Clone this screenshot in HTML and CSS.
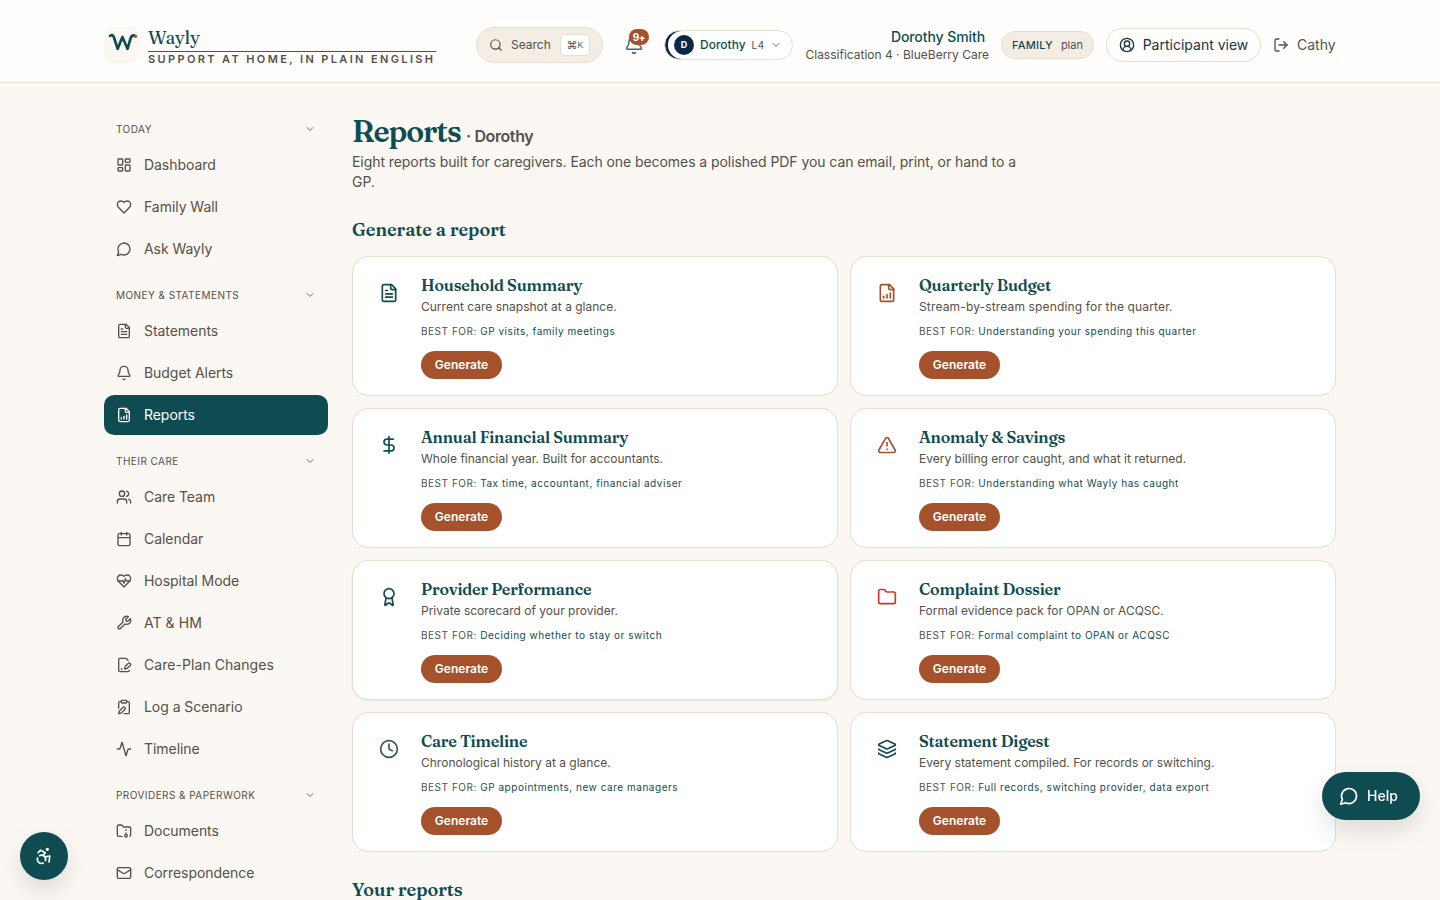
FILE: index.html
```html
<!DOCTYPE html>
<html lang="en">
<head>
    <meta charset="UTF-8">
    <meta name="viewport" content="width=device-width, initial-scale=1.0">
    <title>Reports - Wayly</title>
    <link rel="stylesheet" href="styles.css">
</head>
<body>
    <!-- icon set -->
    <svg class="sprite">
        <symbol id="search" viewBox="0 0 24 24"><circle cx="11" cy="11" r="8"/><path d="m21 21-4.3-4.3"/></symbol>
        <symbol id="bell" viewBox="0 0 24 24"><path d="M10.268 21a2 2 0 0 0 3.464 0"/><path d="M3.262 15.326A1 1 0 0 0 4 17h16a1 1 0 0 0 .74-1.673C19.41 13.956 18 12.499 18 8A6 6 0 0 0 6 8c0 4.499-1.411 5.956-2.738 7.326"/></symbol>
        <symbol id="chevron" viewBox="0 0 24 24"><path d="m6 9 6 6 6-6"/></symbol>
        <symbol id="user-circle" viewBox="0 0 24 24"><path d="M18 20a6 6 0 0 0-12 0"/><circle cx="12" cy="10" r="4"/><circle cx="12" cy="12" r="10"/></symbol>
        <symbol id="logout" viewBox="0 0 24 24"><path d="M9 21H5a2 2 0 0 1-2-2V5a2 2 0 0 1 2-2h4"/><path d="m16 17 5-5-5-5"/><path d="M21 12H9"/></symbol>
        <symbol id="dashboard" viewBox="0 0 24 24"><rect width="7" height="9" x="3" y="3" rx="1"/><rect width="7" height="5" x="14" y="3" rx="1"/><rect width="7" height="9" x="14" y="12" rx="1"/><rect width="7" height="5" x="3" y="16" rx="1"/></symbol>
        <symbol id="heart" viewBox="0 0 24 24"><path d="M19 14c1.49-1.46 3-3.21 3-5.5A5.5 5.5 0 0 0 16.5 3c-1.76 0-3 .5-4.5 2-1.5-1.5-2.74-2-4.5-2A5.5 5.5 0 0 0 2 8.5c0 2.3 1.5 4.05 3 5.5l7 7Z"/></symbol>
        <symbol id="message" viewBox="0 0 24 24"><path d="M7.9 20A9 9 0 1 0 4 16.1L2 22Z"/></symbol>
        <symbol id="file-text" viewBox="0 0 24 24"><path d="M15 2H6a2 2 0 0 0-2 2v16a2 2 0 0 0 2 2h12a2 2 0 0 0 2-2V7Z"/><path d="M14 2v4a2 2 0 0 0 2 2h4"/><path d="M10 9H8"/><path d="M16 13H8"/><path d="M16 17H8"/></symbol>
        <symbol id="file-chart" viewBox="0 0 24 24"><path d="M15 2H6a2 2 0 0 0-2 2v16a2 2 0 0 0 2 2h12a2 2 0 0 0 2-2V7Z"/><path d="M14 2v4a2 2 0 0 0 2 2h4"/><path d="M8 18v-2"/><path d="M12 18v-4"/><path d="M16 18v-6"/></symbol>
        <symbol id="users" viewBox="0 0 24 24"><path d="M16 21v-2a4 4 0 0 0-4-4H6a4 4 0 0 0-4 4v2"/><circle cx="9" cy="7" r="4"/><path d="M22 21v-2a4 4 0 0 0-3-3.87"/><path d="M16 3.13a4 4 0 0 1 0 7.75"/></symbol>
        <symbol id="calendar" viewBox="0 0 24 24"><path d="M8 2v4"/><path d="M16 2v4"/><rect width="18" height="18" x="3" y="4" rx="2"/><path d="M3 10h18"/></symbol>
        <symbol id="heart-pulse" viewBox="0 0 24 24"><path d="M19 14c1.49-1.46 3-3.21 3-5.5A5.5 5.5 0 0 0 16.5 3c-1.76 0-3 .5-4.5 2-1.5-1.5-2.74-2-4.5-2A5.5 5.5 0 0 0 2 8.5c0 2.3 1.5 4.05 3 5.5l7 7Z"/><path d="M3.22 12H9.5l.5-1 2 4.5 2-7 1.5 3.5h5.27"/></symbol>
        <symbol id="wrench" viewBox="0 0 24 24"><path d="M14.7 6.3a1 1 0 0 0 0 1.4l1.6 1.6a1 1 0 0 0 1.4 0l3.77-3.77a6 6 0 0 1-7.94 7.94l-6.91 6.91a2.12 2.12 0 0 1-3-3l6.91-6.91a6 6 0 0 1 7.94-7.94l-3.76 3.76z"/></symbol>
        <symbol id="file-pen" viewBox="0 0 24 24"><path d="m18 5-2.414-2.414A2 2 0 0 0 14.172 2H6a2 2 0 0 0-2 2v16a2 2 0 0 0 2 2h12a2 2 0 0 0 2-2"/><path d="M21.378 12.626a1 1 0 0 0-3.004-3.004l-4.01 4.012a2 2 0 0 0-.506.854l-.837 2.87a.5.5 0 0 0 .62.62l2.87-.837a2 2 0 0 0 .854-.506z"/><path d="M8 18h1"/></symbol>
        <symbol id="clipboard-pen" viewBox="0 0 24 24"><rect width="8" height="4" x="8" y="2" rx="1"/><path d="M16 4h2a2 2 0 0 1 2 2v14a2 2 0 0 1-2 2h-5.5"/><path d="M4 13.5V6a2 2 0 0 1 2-2h2"/><path d="M13.378 15.626a1 1 0 1 0-3.004-3.004l-5.01 5.012a2 2 0 0 0-.506.854l-.837 2.87a.5.5 0 0 0 .62.62l2.87-.837a2 2 0 0 0 .854-.506z"/></symbol>
        <symbol id="activity" viewBox="0 0 24 24"><path d="M22 12h-2.48a2 2 0 0 0-1.93 1.46l-2.35 8.36a.25.25 0 0 1-.48 0L9.24 2.18a.25.25 0 0 0-.48 0l-2.35 8.36A2 2 0 0 1 4.49 12H2"/></symbol>
        <symbol id="folder-archive" viewBox="0 0 24 24"><circle cx="15" cy="19" r="2"/><path d="M20.9 19.8A2 2 0 0 0 22 18V8a2 2 0 0 0-2-2h-7.9a2 2 0 0 1-1.69-.9L9.6 3.9A2 2 0 0 0 7.93 3H4a2 2 0 0 0-2 2v13a2 2 0 0 0 2 2h5.1"/><path d="M15 11v-1"/><path d="M15 17v-2"/></symbol>
        <symbol id="mail" viewBox="0 0 24 24"><rect width="20" height="16" x="2" y="4" rx="2"/><path d="m22 7-8.97 5.7a1.94 1.94 0 0 1-2.06 0L2 7"/></symbol>
        <symbol id="dollar" viewBox="0 0 24 24"><path d="M12 2v20"/><path d="M17 5H9.5a3.5 3.5 0 0 0 0 7h5a3.5 3.5 0 0 1 0 7H6"/></symbol>
        <symbol id="warning" viewBox="0 0 24 24"><path d="m21.73 18-8-14a2 2 0 0 0-3.48 0l-8 14A2 2 0 0 0 4 21h16a2 2 0 0 0 1.73-3"/><path d="M12 9v4"/><path d="M12 17h.01"/></symbol>
        <symbol id="award" viewBox="0 0 24 24"><path d="m15.477 12.89 1.515 8.526a.5.5 0 0 1-.81.47l-3.58-2.687a1 1 0 0 0-1.197 0l-3.586 2.686a.5.5 0 0 1-.81-.469l1.514-8.526"/><circle cx="12" cy="8" r="6"/></symbol>
        <symbol id="folder" viewBox="0 0 24 24"><path d="M20 20a2 2 0 0 0 2-2V8a2 2 0 0 0-2-2h-7.9a2 2 0 0 1-1.69-.9L9.6 3.9A2 2 0 0 0 7.93 3H4a2 2 0 0 0-2 2v13a2 2 0 0 0 2 2Z"/></symbol>
        <symbol id="clock" viewBox="0 0 24 24"><circle cx="12" cy="12" r="10"/><path d="M12 6v6l4 2"/></symbol>
        <symbol id="layers" viewBox="0 0 24 24"><path d="M12.83 2.18a2 2 0 0 0-1.66 0L2.6 6.08a1 1 0 0 0 0 1.83l8.58 3.91a2 2 0 0 0 1.66 0l8.58-3.9a1 1 0 0 0 0-1.83z"/><path d="M2 12a1 1 0 0 0 .58.91l8.6 3.91a2 2 0 0 0 1.65 0l8.58-3.9A1 1 0 0 0 22 12"/><path d="M2 17a1 1 0 0 0 .58.91l8.6 3.91a2 2 0 0 0 1.65 0l8.58-3.9A1 1 0 0 0 22 17"/></symbol>
        <symbol id="accessibility" viewBox="0 0 24 24"><circle cx="16" cy="4" r="1"/><path d="m18 19 1-7-6 1"/><path d="m5 8 3-3 5.5 3-2.36 3.5"/><path d="M4.24 14.5a5 5 0 0 0 6.88 6"/><path d="M13.76 17.5a5 5 0 0 0-6.88-6"/></symbol>
    </svg>

    <header class="header">
        <div class="header-inner">
            <a class="brand">
                <svg class="logo" viewBox="0 0 36 36">
                    <path d="M6 9C8.2 7.4 9.4 8.4 10.1 11l3.6 10.8L18.4 10l5.1 11.8L26.6 11.4C27.2 9.2 28 8.4 29.8 8.3"/>
                    <circle cx="31.5" cy="9.3" r="1.7"/>
                </svg>
                <div class="brand-text">
                    <div class="brand-name">Wayly</div>
                    <div class="tagline">SUPPORT AT HOME, IN PLAIN ENGLISH</div>
                </div>
            </a>
            <div class="header-right">
                <button class="search"><svg class="icon"><use href="#search"/></svg><span>Search</span><kbd><span>⌘</span>K</kbd></button>
                <button class="bell"><svg class="icon"><use href="#bell"/></svg><span class="badge">9+</span></button>
                <button class="profile">
                    <span class="avatar">D</span><span class="profile-name">Dorothy</span><span class="level">L4</span>
                    <svg class="icon"><use href="#chevron"/></svg>
                </button>
                <div class="person">
                    <div class="person-name">Dorothy Smith</div>
                    <div class="person-info">Classification 4 · BlueBerry Care</div>
                </div>
                <div class="plan"><b>FAMILY</b><span>plan</span></div>
                <button class="participant"><svg class="icon"><use href="#user-circle"/></svg>Participant view</button>
                <button class="logout"><svg class="icon"><use href="#logout"/></svg>Cathy</button>
            </div>
        </div>
    </header>

    <div class="layout">
        <nav class="sidebar">
            <div class="nav-group">
                <div class="nav-title">TODAY<svg class="icon"><use href="#chevron"/></svg></div>
                <a class="nav-item"><svg class="icon"><use href="#dashboard"/></svg>Dashboard</a>
                <a class="nav-item"><svg class="icon"><use href="#heart"/></svg>Family Wall</a>
                <a class="nav-item"><svg class="icon"><use href="#message"/></svg>Ask Wayly</a>
            </div>
            <div class="nav-group">
                <div class="nav-title">MONEY &amp; STATEMENTS<svg class="icon"><use href="#chevron"/></svg></div>
                <a class="nav-item"><svg class="icon"><use href="#file-text"/></svg>Statements</a>
                <a class="nav-item"><svg class="icon"><use href="#bell"/></svg>Budget Alerts</a>
                <a class="nav-item active"><svg class="icon"><use href="#file-chart"/></svg>Reports</a>
            </div>
            <div class="nav-group">
                <div class="nav-title">THEIR CARE<svg class="icon"><use href="#chevron"/></svg></div>
                <a class="nav-item"><svg class="icon"><use href="#users"/></svg>Care Team</a>
                <a class="nav-item"><svg class="icon"><use href="#calendar"/></svg>Calendar</a>
                <a class="nav-item"><svg class="icon"><use href="#heart-pulse"/></svg>Hospital Mode</a>
                <a class="nav-item wide"><svg class="icon"><use href="#wrench"/></svg>AT &amp; HM</a>
                <a class="nav-item wide"><svg class="icon"><use href="#file-pen"/></svg>Care-Plan Changes</a>
                <a class="nav-item"><svg class="icon"><use href="#clipboard-pen"/></svg>Log a Scenario</a>
                <a class="nav-item"><svg class="icon"><use href="#activity"/></svg>Timeline</a>
            </div>
            <div class="nav-group">
                <div class="nav-title">PROVIDERS &amp; PAPERWORK<svg class="icon"><use href="#chevron"/></svg></div>
                <a class="nav-item"><svg class="icon"><use href="#folder-archive"/></svg>Documents</a>
                <a class="nav-item"><svg class="icon"><use href="#mail"/></svg>Correspondence</a>
            </div>
        </nav>

        <main class="main">
            <h1>Reports <span>· Dorothy</span></h1>
            <p class="intro">Eight reports built for caregivers. Each one becomes a polished PDF you can email, print, or hand to a GP.</p>

            <h2>Generate a report</h2>
            <div class="cards">
                <div class="card">
                    <div class="card-icon"><svg class="icon"><use href="#file-text"/></svg></div>
                    <div>
                        <h3>Household Summary</h3>
                        <p class="desc">Current care snapshot at a glance.</p>
                        <p class="best">BEST FOR: <span>GP visits, family meetings</span></p>
                        <button class="generate">Generate</button>
                    </div>
                </div>
                <div class="card">
                    <div class="card-icon rust"><svg class="icon"><use href="#file-chart"/></svg></div>
                    <div>
                        <h3>Quarterly Budget</h3>
                        <p class="desc wide">Stream-by-stream spending for the quarter.</p>
                        <p class="best">BEST FOR: <span>Understanding your spending this quarter</span></p>
                        <button class="generate">Generate</button>
                    </div>
                </div>
                <div class="card">
                    <div class="card-icon"><svg class="icon"><use href="#dollar"/></svg></div>
                    <div>
                        <h3>Annual Financial Summary</h3>
                        <p class="desc">Whole financial year. Built for accountants.</p>
                        <p class="best">BEST FOR: <span>Tax time, accountant, financial adviser</span></p>
                        <button class="generate">Generate</button>
                    </div>
                </div>
                <div class="card">
                    <div class="card-icon rust"><svg class="icon"><use href="#warning"/></svg></div>
                    <div>
                        <h3>Anomaly &amp; Savings</h3>
                        <p class="desc">Every billing error caught, and what it returned.</p>
                        <p class="best">BEST FOR: <span>Understanding what Wayly has caught</span></p>
                        <button class="generate">Generate</button>
                    </div>
                </div>
                <div class="card raised">
                    <div class="card-icon"><svg class="icon"><use href="#award"/></svg></div>
                    <div>
                        <h3>Provider Performance</h3>
                        <p class="desc">Private scorecard of your provider.</p>
                        <p class="best">BEST FOR: <span>Deciding whether to stay or switch</span></p>
                        <button class="generate">Generate</button>
                    </div>
                </div>
                <div class="card">
                    <div class="card-icon red"><svg class="icon"><use href="#folder"/></svg></div>
                    <div>
                        <h3>Complaint Dossier</h3>
                        <p class="desc">Formal evidence pack for OPAN or ACQSC.</p>
                        <p class="best">BEST FOR: <span>Formal complaint to OPAN or ACQSC</span></p>
                        <button class="generate">Generate</button>
                    </div>
                </div>
                <div class="card">
                    <div class="card-icon slate"><svg class="icon"><use href="#clock"/></svg></div>
                    <div>
                        <h3>Care Timeline</h3>
                        <p class="desc">Chronological history at a glance.</p>
                        <p class="best">BEST FOR: <span>GP appointments, new care managers</span></p>
                        <button class="generate">Generate</button>
                    </div>
                </div>
                <div class="card">
                    <div class="card-icon"><svg class="icon"><use href="#layers"/></svg></div>
                    <div>
                        <h3>Statement Digest</h3>
                        <p class="desc">Every statement compiled. For records or switching.</p>
                        <p class="best">BEST FOR: <span>Full records, switching provider, data export</span></p>
                        <button class="generate">Generate</button>
                    </div>
                </div>
            </div>

            <h2>Your reports</h2>
        </main>
    </div>

    <button class="a11y"><svg class="icon"><use href="#accessibility"/></svg></button>
    <button class="help"><svg class="icon"><use href="#message"/></svg>Help</button>
</body>
</html>
```
FILE: styles.css
```css
* {
    box-sizing: border-box;
}

body {
    margin: 0;
    height: 900px;
    overflow: hidden;
    font-family: Inter, sans-serif;
    font-size: 14px;
    line-height: 20px;
    color: #54504a;
    background: #fbf7f2;
}

h1, h2, h3, p {
    margin: 0;
}

h1, h2, h3, .brand-name {
    font-family: Fraunces, "Liberation Serif", serif;
    font-weight: 600;
    color: #0f4c52;
    white-space: nowrap;
}

button {
    padding: 0;
    border: none;
    background: none;
    font: inherit;
    color: inherit;
    cursor: pointer;
}

.sprite {
    display: none;
}

.icon {
    width: 16px;
    height: 16px;
    flex-shrink: 0;
    fill: none;
    stroke: currentColor;
    stroke-width: 2;
    stroke-linecap: round;
    stroke-linejoin: round;
}

/* header */
.header {
    height: 83px;
    background: #fffefc;
    border-bottom: 1px solid #e6ded0;
}

.header-inner {
    display: flex;
    justify-content: space-between;
    align-items: center;
    width: 1232px;
    height: 82px;
    margin: 0 auto;
    padding-top: 8px;
}

.brand {
    display: flex;
    gap: 8px;
    margin-top: 2px;
}

.logo {
    width: 36px;
    height: 36px;
    margin-top: 1px;
    border-radius: 10px;
    background: #fbf7f2;
}

.logo path {
    fill: none;
    stroke: #0f4c52;
    stroke-width: 2.7;
    stroke-linecap: round;
    stroke-linejoin: round;
}

.logo circle {
    fill: #a5512b;
}

.brand-text {
    width: 288px;
}

.brand-name {
    height: 26px;
    font-size: 18px;
    line-height: 24px;
    font-weight: 500;
    letter-spacing: -0.2px;
    border-bottom: 1px solid #54504a;
}

.tagline {
    font-size: 11px;
    line-height: 14px;
    font-weight: 600;
    letter-spacing: 2.37px;
    white-space: nowrap;
}

.header-right {
    display: flex;
    align-items: center;
    gap: 12px;
    white-space: nowrap;
}

.search {
    display: flex;
    align-items: center;
    gap: 8px;
    width: 127px;
    height: 36px;
    padding: 0 12px;
    border: 1px solid #e6ded0;
    border-radius: 18px;
    background: #f3ede4;
    font-size: 12px;
}

.search .icon {
    width: 14px;
    height: 14px;
}

.search kbd {
    display: flex;
    align-items: center;
    justify-content: center;
    width: 30px;
    height: 22px;
    margin-left: auto;
    border: 1px solid #e6ded0;
    border-radius: 4px;
    background: #fff;
    font-family: "Liberation Sans", sans-serif;
    font-size: 9px;
    line-height: 20px;
}

.search kbd span {
    font-family: Inter, sans-serif;
    font-size: 11px;
}

.bell {
    position: relative;
    display: flex;
    justify-content: center;
    align-items: center;
    width: 37px;
    height: 36px;
    color: #445f7b;
}

.bell .icon {
    width: 20px;
    height: 20px;
    stroke-width: 1.8;
}

.badge {
    position: absolute;
    top: 2px;
    right: 3px;
    width: 20px;
    height: 16px;
    border-radius: 8px;
    background: #a5512b;
    color: #fff;
    font-size: 10px;
    line-height: 16px;
    font-weight: 700;
    letter-spacing: -0.3px;
}

.profile {
    display: flex;
    align-items: center;
    width: 129px;
    height: 30px;
    padding: 0 10px 0 9px;
    border: 1px solid #e6ded0;
    border-radius: 15px;
    background: #fff;
    box-shadow: inset 3px 0 0 #0e2746;
    font-size: 12px;
}

.avatar {
    width: 20px;
    height: 20px;
    margin-right: 6px;
    border-radius: 50%;
    background: #0e2746;
    color: #fff;
    font-size: 9px;
    line-height: 20px;
    font-weight: 700;
}

.profile-name {
    margin-right: 6px;
    color: #0f4c52;
    font-weight: 500;
}

.level {
    margin-right: auto;
    font-size: 10px;
    letter-spacing: 0.5px;
}

.profile .icon {
    width: 12px;
    height: 12px;
    color: #4a8583;
}

.person {
    width: 184px;
    text-align: right;
}

.person-name {
    padding-right: 4px;
    color: #0f4c52;
    font-weight: 500;
    letter-spacing: -0.08px;
}

.person-info {
    font-size: 12px;
    line-height: 16px;
}

.plan {
    display: flex;
    align-items: center;
    justify-content: center;
    gap: 8px;
    width: 93px;
    height: 28px;
    border: 1px solid #e6ded0;
    border-radius: 14px;
    background: #f3ede4;
    font-size: 11px;
}

.plan b {
    color: #0f4c52;
    font-weight: 500;
    letter-spacing: 0.2px;
}

.participant {
    display: flex;
    align-items: center;
    justify-content: center;
    gap: 8px;
    width: 155px;
    height: 34px;
    border: 1px solid #e6ded0;
    border-radius: 17px;
    color: #1c333b;
}

.logout {
    display: flex;
    align-items: center;
    gap: 8px;
    width: 63px;
}

/* page */
.layout {
    display: flex;
    gap: 24px;
    width: 1232px;
    margin: 0 auto;
    padding-top: 30px;
}

.sidebar {
    width: 224px;
}

.nav-group {
    margin-bottom: 10px;
}

.nav-title {
    display: flex;
    align-items: center;
    justify-content: space-between;
    height: 32px;
    padding: 0 12px;
    font-size: 10px;
    letter-spacing: 0.45px;
}

.nav-title .icon {
    width: 12px;
    height: 12px;
    opacity: 0.8;
}

.nav-item {
    display: flex;
    align-items: center;
    gap: 12px;
    height: 40px;
    padding: 0 12px;
    border-radius: 10px;
    letter-spacing: -0.05px;
}

.nav-item + .nav-item {
    margin-top: 2px;
}

.nav-item.active {
    background: #0f4c52;
    color: #fff;
}

.nav-item.wide {
    letter-spacing: 0.06px;
}

.main {
    width: 984px;
    padding-top: 1px;
}

h1 {
    margin-bottom: -2px;
    font-size: 30px;
    line-height: 36px;
    letter-spacing: -1.1px;
}

h1 span {
    font-family: Inter, sans-serif;
    font-size: 16px;
    letter-spacing: -0.4px;
    color: #54504a;
}

.intro {
    width: 672px;
    margin-bottom: 24px;
    letter-spacing: -0.07px;
}

h2 {
    margin-bottom: 12px;
    font-size: 18px;
    line-height: 28px;
    letter-spacing: -0.03px;
}

.cards {
    display: grid;
    grid-template-columns: 1fr 1fr;
    gap: 12px;
    margin-bottom: 24px;
}

.card {
    display: flex;
    gap: 12px;
    height: 140px;
    padding: 16px;
    border: 1px solid #e6ded0;
    border-radius: 16px;
    background: #fff;
}

.card.raised {
    box-shadow: 0 1px 2px rgba(0,0,0,0.08);
}

.card-icon {
    display: flex;
    align-items: center;
    justify-content: center;
    width: 40px;
    height: 40px;
    color: #0f4c52;
}

.card-icon .icon {
    width: 20px;
    height: 20px;
}

.card-icon.rust {
    color: #a5512b;
}

.card-icon.red {
    color: #c53a30;
}

.card-icon.slate {
    color: #3d5558;
}

h3 {
    font-size: 16px;
    line-height: 24px;
    letter-spacing: -0.22px;
}

.desc {
    margin-top: 2px;
    font-size: 12px;
    line-height: 16px;
}

.desc.wide {
    letter-spacing: 0.15px;
}

.best {
    margin-top: 8px;
    font-size: 10px;
    line-height: 16px;
    letter-spacing: 0.53px;
}

.best span {
    color: #0f4c52;
}

.generate {
    display: block;
    width: 81px;
    height: 28px;
    margin-top: 12px;
    border-radius: 14px;
    background: #a5512b;
    color: #fff;
    font-size: 12px;
    font-weight: 600;
}

/* floating buttons */
.a11y, .help {
    position: fixed;
    display: flex;
    align-items: center;
    justify-content: center;
    height: 48px;
    border-radius: 24px;
    background: #0f4c52;
    color: #fff;
    box-shadow: 0 10px 25px rgba(0,0,0,0.12);
}

.a11y {
    left: 20px;
    bottom: 20px;
    width: 48px;
}

.a11y .icon {
    width: 20px;
    height: 20px;
}

.help {
    right: 20px;
    bottom: 80px;
    width: 98px;
    gap: 8px;
    padding-right: 5px;
    font-weight: 500;
}

.help .icon {
    width: 20px;
    height: 20px;
}
```
